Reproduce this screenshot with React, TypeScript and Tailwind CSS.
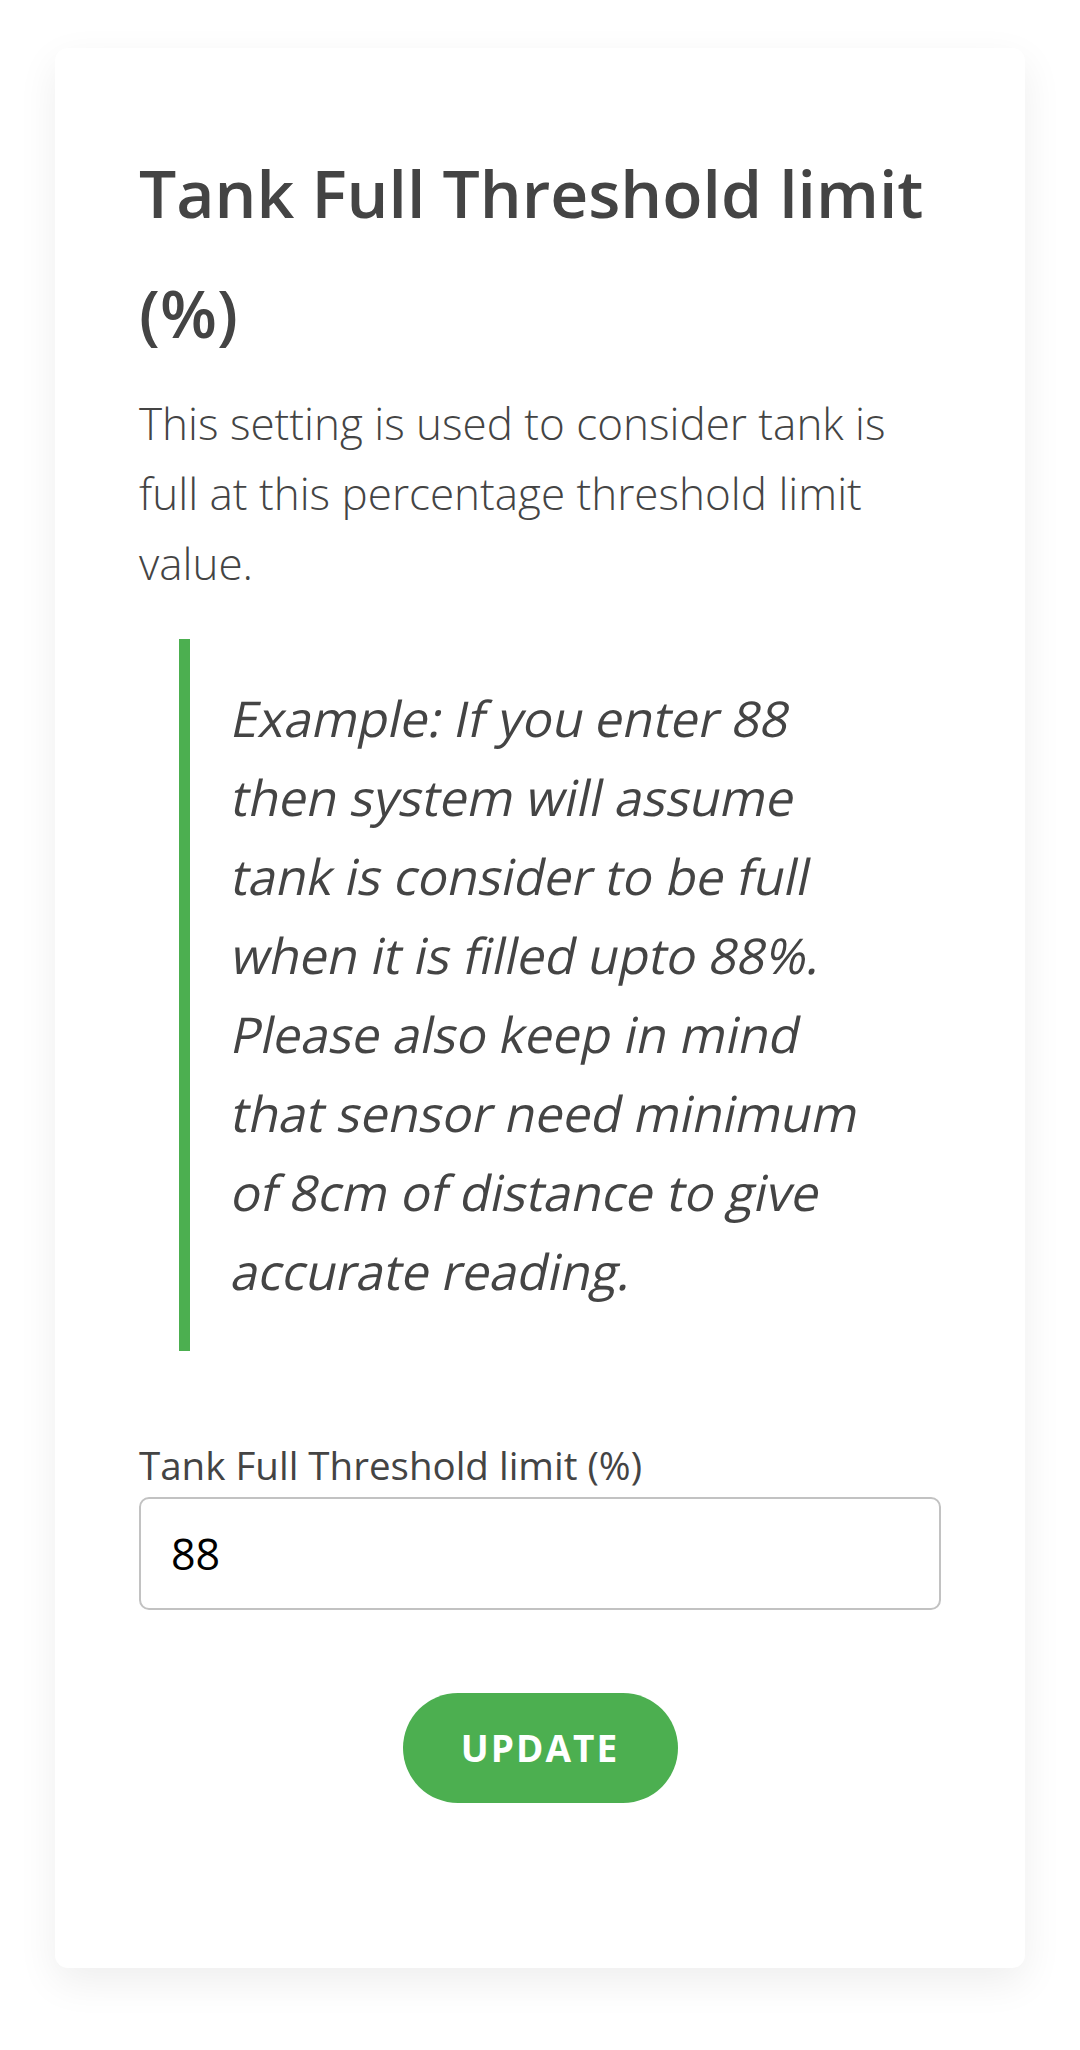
const example =
  'Example: If you enter 88 then system will assume tank is consider to be full when it is filled upto 88%. Please also keep in mind that sensor need minimum of 8cm of distance to give accurate reading.'

// the note is drawn as slanted regular type, not the italic face
function Slanted({ text }: { text: string }) {
  const words = text.split(' ')
  return (
    <>
      {words.map((w, i) => (
        <span key={i}>
          <span className="inline-block -skew-x-[12deg]">{w}</span>
          {i < words.length - 1 ? ' ' : ''}
        </span>
      ))}
    </>
  )
}

export default function App() {
  return (
    <div
      className="min-h-[2050px] bg-white px-[55px] pt-[48px] pb-[80px]"
      style={{ fontFamily: '"Open Sans", "Noto Sans", sans-serif' }}
    >
      <div className="rounded-[13px] bg-white px-[84px] pt-[84px] pb-[165px] shadow-[0_14px_40px_rgba(0,0,0,0.07)]">
        <h1 className="text-[66px] font-semibold leading-[120px] text-[#444]">
          Tank Full Threshold limit (%)
        </h1>
        <p className="mt-[16px] text-[44px] font-light leading-[70px] text-[#444]">
          This setting is used to consider tank is full at this percentage threshold limit value.
        </p>

        <blockquote className="mx-[40px] mt-[41px] border-l-[11px] border-[#4caf50] py-[40px] pl-[43px] pr-[20px] text-[49.5px] leading-[79px] text-[#444]">
          <Slanted text={example} />
        </blockquote>

        <form className="mt-[88px]" onSubmit={(e) => e.preventDefault()}>
          <label className="block text-[38.5px] leading-[52px] text-[#444]">
            Tank Full Threshold limit (%)
          </label>
          <input
            type="text"
            defaultValue="88"
            className="mt-[6px] block h-[113px] w-full rounded-[10px] border-2 border-[#c2c2c2] bg-white px-[30px] text-[43px] text-black outline-none"
          />
          <div className="mt-[83px] flex justify-center">
            <button
              type="submit"
              className="h-[110px] w-[275px] rounded-full bg-[#4caf50] text-[37px] font-bold tracking-[2px] text-white"
            >
              UPDATE
            </button>
          </div>
        </form>
      </div>
    </div>
  )
}
